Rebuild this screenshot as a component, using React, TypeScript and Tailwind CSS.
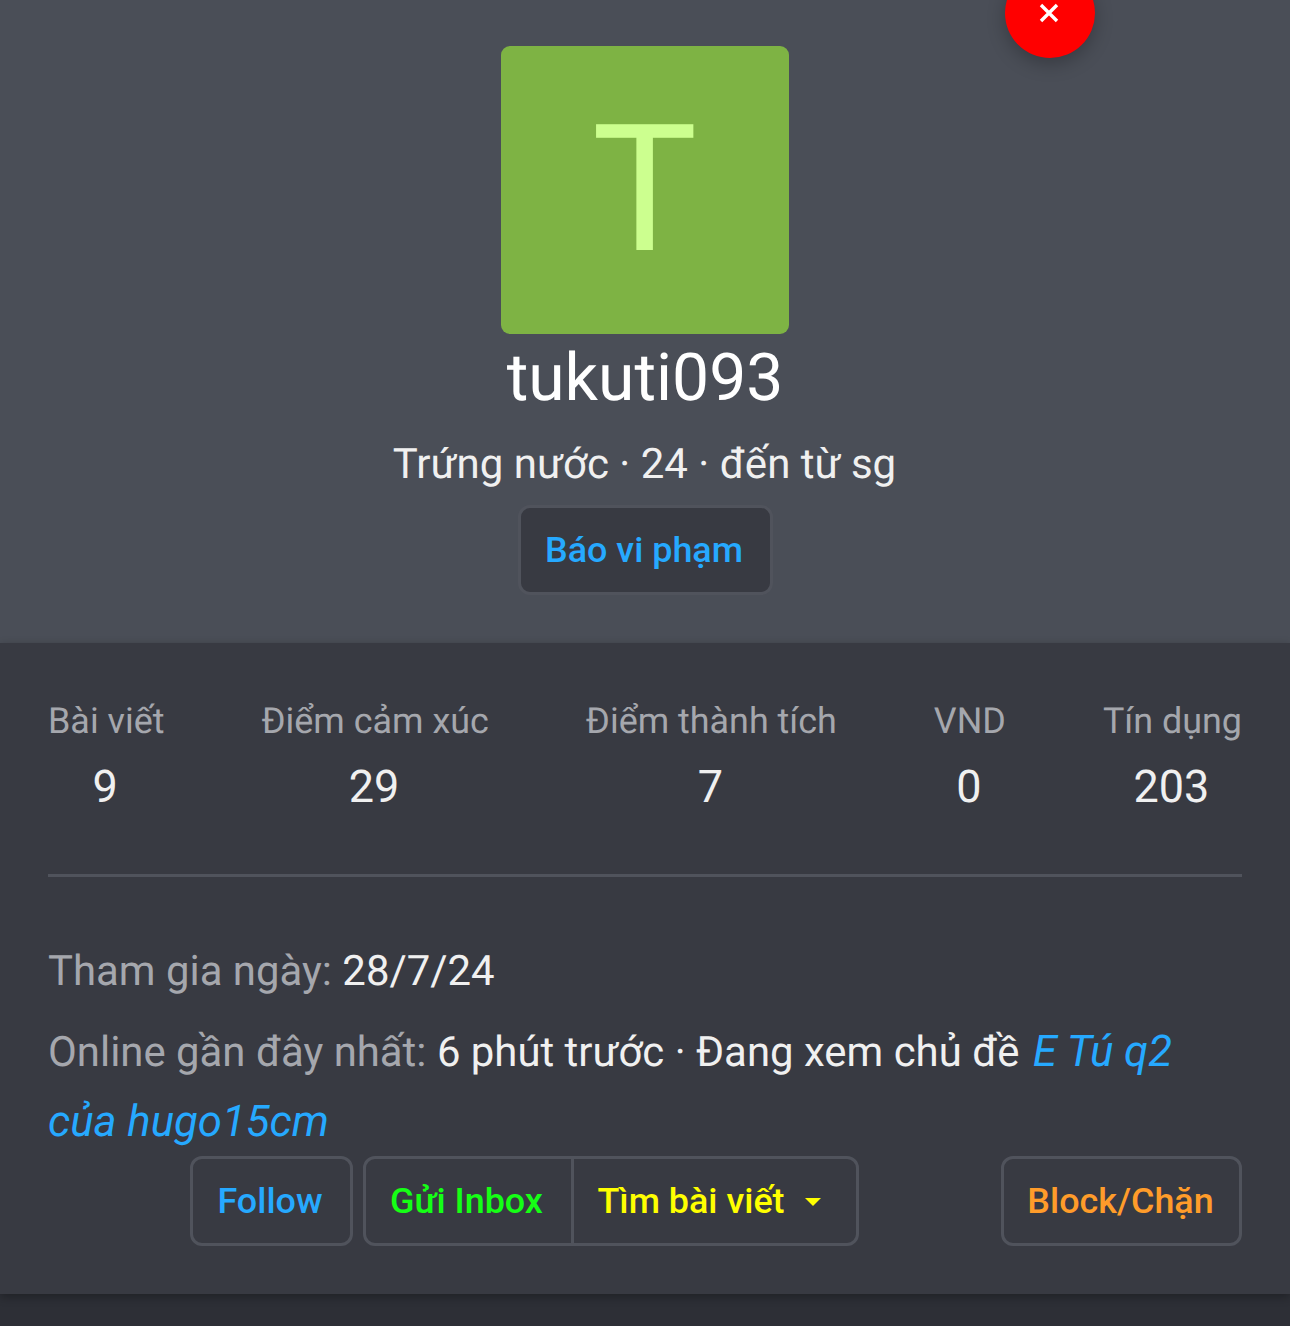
import React from 'react';

const stats = [
  { label: 'Bài viết', value: '9' },
  { label: 'Điểm cảm xúc', value: '29' },
  { label: 'Điểm thành tích', value: '7' },
  { label: 'VND', value: '0' },
  { label: 'Tín dụng', value: '203' },
];

const App: React.FC = () => {
  return (
    <div className="relative h-[1326px] overflow-hidden bg-[#2d2f36] font-['Roboto',sans-serif] [text-rendering:geometricPrecision]">
      {/* close button hangs off the top of the header */}
      <button className="absolute left-[1005px] top-[-32px] z-10 flex h-[90px] w-[90px] items-center justify-center rounded-full bg-[#ff0000] shadow-[0_6px_18px_rgba(0,0,0,0.25)]">
        <svg className="ml-[-2px] mt-[-1px] h-[20px] w-[20px]" viewBox="0 0 20 20" fill="none" stroke="#fff" strokeWidth="3.4">
          <path d="M2 2 L18 18 M18 2 L2 18" />
        </svg>
      </button>

      <header className="flex h-[643px] flex-col items-center bg-[#4a4e57] pt-[46px]">
        <div className="flex h-[288px] w-[288px] items-center justify-center rounded-[9px] bg-[#7eb344] pr-[1px] text-[177px] leading-none text-[#ccff8f]">
          T
        </div>
        <h1 className="mt-[9px] text-[66px] leading-[72px] text-white">tukuti093</h1>
        <p className="mt-[19px] pr-[1px] text-[42px] leading-[62px] text-[#f0f0f0]">Trứng nước · 24 · đến từ sg</p>
        <button className="mt-[9px] flex h-[90px] w-[255px] items-center justify-center rounded-[12px] border-[3px] border-[#50535c] bg-[#383a42] pr-[2px] pt-[2px] text-[35.9px] font-medium text-[#26a9ff]">
          Báo vi phạm
        </button>
      </header>

      <section className="h-[651px] bg-[#383a42] px-[48px] pt-[52px] shadow-[0_3px_9px_rgba(0,0,0,0.3)]">
        <div className="flex justify-between border-b-[3px] border-[#50535c] pb-[60px]">
          {stats.map((s) => (
            <div key={s.label} className="flex flex-col items-center">
              <span className="text-[35.9px] leading-[52px] text-[#a5a7ad]">{s.label}</span>
              <span className="mt-[13px] pr-[2px] text-[45px] leading-[54px] text-[#f0f0f0]">{s.value}</span>
            </div>
          ))}
        </div>

        <p className="mt-[60px] text-[41.9px] leading-[69px] text-[#a5a7ad]">
          Tham gia ngày: <span className="text-[#f0f0f0]">28/7/24</span>
        </p>
        <p className="mt-[11px] text-[41.9px] leading-[69px] text-[#a5a7ad]">
          Online gần đây nhất:{' '}
          <span className="text-[#f0f0f0]">6 phút trước · Đang xem chủ đề </span>
          <a className="ml-[3px] text-[43.7px] italic text-[#26a9ff]">E Tú q2 của hugo15cm</a>
        </p>

        <div className="mt-[-1px] flex items-center">
          <button className="ml-[142px] flex h-[90px] w-[163px] items-center justify-center rounded-[12px] border-[3px] border-[#50535c] pr-[3px] pt-[2px] text-[35.9px] font-medium text-[#26a9ff]">
            Follow
          </button>
          <div className="ml-[10px] flex h-[90px] w-[496px] rounded-[12px] border-[3px] border-[#50535c]">
            <button className="w-[208px] border-r-[3px] border-[#50535c] pr-[4px] pt-[2px] text-[35.9px] font-medium text-[#15ff15]">
              Gửi Inbox
            </button>
            <button className="flex flex-1 items-center justify-center gap-[20px] pr-[12px] pt-[2px] text-[35.9px] font-medium text-[#ffff00]">
              Tìm bài viết
              <span className="h-0 w-0 border-x-[8px] border-t-[8px] border-x-transparent border-t-[#ffff00]" />
            </button>
          </div>
          <button className="ml-auto flex h-[90px] w-[241px] items-center justify-center rounded-[12px] border-[3px] border-[#50535c] pr-[2px] pt-[2px] text-[35.9px] font-medium text-[#ff9c2a]">
            Block/Chặn
          </button>
        </div>
      </section>
    </div>
  );
};

export default App;
